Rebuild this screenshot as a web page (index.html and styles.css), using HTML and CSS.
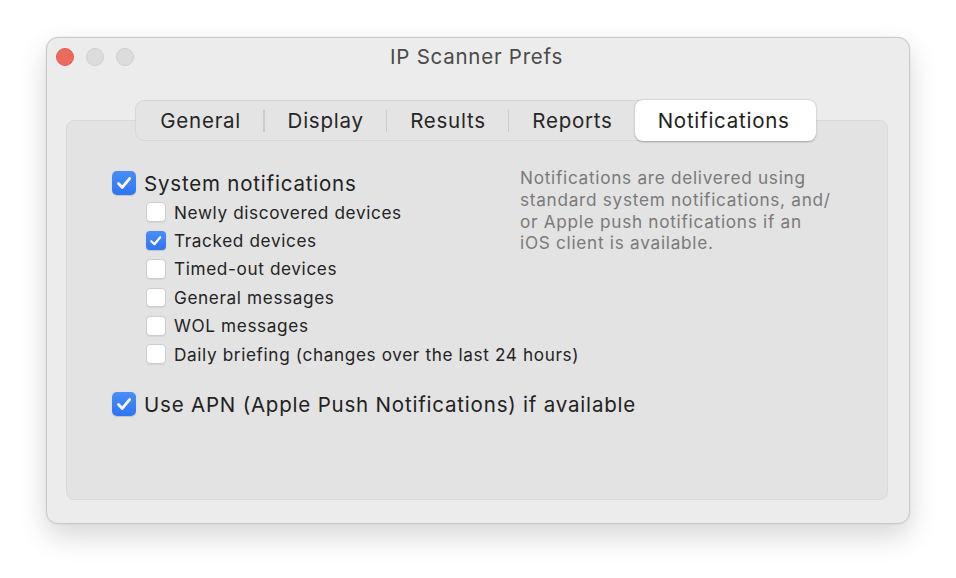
FILE: index.html
```html
<!DOCTYPE html>
<html>
<head>
<meta charset="utf-8">
<title>IP Scanner Prefs</title>
<link rel="stylesheet" href="styles.css">
</head>
<body>
<div class="window">
  <div class="titlebar">
    <div class="lights">
      <span class="light red"></span>
      <span class="light gray"></span>
      <span class="light gray"></span>
    </div>
    <div class="title">IP Scanner Prefs</div>
    <div></div>
  </div>
  <div class="body">
    <div class="tabs">
      <div class="tab first">General</div>
      <div class="sep"></div>
      <div class="tab">Display</div>
      <div class="sep"></div>
      <div class="tab">Results</div>
      <div class="sep"></div>
      <div class="tab">Reports</div>
      <div class="tab active">Notifications</div>
    </div>
    <div class="panel">
      <div class="top">
        <div class="options">
          <label class="row big">
            <span class="box big checked"><svg viewBox="0 0 24 24"><path d="M6.5 12.6 L10.3 16.4 L17.6 7.6"/></svg></span>
            <span>System notifications</span>
          </label>
          <div class="sub">
            <label class="row small"><span class="box small"></span><span>Newly discovered devices</span></label>
            <label class="row small"><span class="box small checked"><svg viewBox="0 0 20 20"><path d="M5.4 10.4 L8.6 13.6 L14.6 6.4"/></svg></span><span>Tracked devices</span></label>
            <label class="row small"><span class="box small"></span><span>Timed-out devices</span></label>
            <label class="row small"><span class="box small"></span><span>General messages</span></label>
            <label class="row small"><span class="box small"></span><span>WOL messages</span></label>
            <label class="row small"><span class="box small"></span><span>Daily briefing (changes over the last 24 hours)</span></label>
          </div>
        </div>
        <p class="help">Notifications are delivered using<br>standard system notifications, and/<br>or Apple push notifications if an<br>iOS client is available.</p>
      </div>
      <label class="row big apn">
        <span class="box big checked"><svg viewBox="0 0 24 24"><path d="M6.5 12.6 L10.3 16.4 L17.6 7.6"/></svg></span>
        <span>Use APN (Apple Push Notifications) if available</span>
      </label>
    </div>
  </div>
</div>
</body>
</html>
```

FILE: styles.css
```css
html, body {
  margin: 0;
  padding: 0;
  background: #ffffff;
}

body {
  font-family: Inter, "Noto Sans", "Liberation Sans", sans-serif;
  color: #242424;
  width: 956px;
  height: 578px;
  overflow: hidden;
}

.window {
  box-sizing: border-box;
  margin: 37px 0 0 46px;
  width: 864px;
  height: 487px;
  background: #ececec;
  border: 1px solid #c9c9c9;
  border-radius: 12px;
  box-shadow: 0 12px 28px rgba(0, 0, 0, 0.16), 0 0 2px rgba(0, 0, 0, 0.1);
  display: flex;
  flex-direction: column;
}

.titlebar {
  height: 38px;
  display: grid;
  grid-template-columns: 1fr auto 1fr;
  align-items: center;
}

.lights {
  display: flex;
  gap: 12px;
  padding-left: 9px;
}

.light {
  width: 18px;
  height: 18px;
  border-radius: 50%;
  box-sizing: border-box;
}

.light.red {
  background: #ed6a5e;
  border: 1px solid #e05a4e;
}

.light.gray {
  background: #dcdcdc;
  border: 1px solid #cfcfcf;
}

.title {
  font-size: 20.5px;
  color: #4a4a4a;
  letter-spacing: 0.75px;
  margin-top: -1px;
  margin-right: 3px;
}

.body {
  flex: 1;
  display: flex;
  flex-direction: column;
  padding: 24px 21px 23px 19px;
}

.tabs {
  align-self: center;
  position: relative;
  z-index: 1;
  display: flex;
  align-items: center;
  height: 41px;
  box-sizing: border-box;
  background: #e4e4e4;
  border: 1px solid #d8d8d8;
  border-radius: 9px;
  margin-right: 3px;
}

.tab {
  font-size: 20.5px;
  letter-spacing: 0.75px;
  color: #262626;
  padding: 0 22px 0 23px;
  height: 100%;
  display: flex;
  align-items: center;
  box-sizing: border-box;
}

.tab.first {
  padding-left: 24px;
}

.tab.active {
  background: #ffffff;
  border-radius: 8px;
  height: 41px;
  margin: -1px -1px -1px 0;
  padding: 0 26px 0 23px;
  box-shadow: 0 0.5px 2px rgba(0, 0, 0, 0.3);
  color: #1e1e1e;
}

.sep {
  width: 1.5px;
  height: 22px;
  background: #cbcbcb;
}

.panel {
  flex: 1;
  margin-top: -21px;
  background: #e3e3e3;
  border: 1px solid #dadada;
  border-radius: 8px;
  padding: 48px 0 0 45px;
  box-sizing: border-box;
}

.top {
  display: flex;
}

.options {
  width: 408px;
  flex: none;
}

.row {
  display: flex;
  align-items: center;
  white-space: nowrap;
}

.row.big {
  height: 28px;
  font-size: 20.5px;
  letter-spacing: 0.8px;
  gap: 8px;
  color: #222222;
}

.row.small {
  height: 28.4px;
  font-size: 17.2px;
  letter-spacing: 0.62px;
  gap: 8.5px;
  color: #242424;
}

.sub {
  margin-top: 1px;
  padding-left: 34px;
}

.box {
  box-sizing: border-box;
  display: flex;
  align-items: center;
  justify-content: center;
  flex: none;
}

.box.big {
  width: 24px;
  height: 24px;
  border-radius: 5px;
}

.box.small {
  width: 19.5px;
  height: 19.5px;
  border-radius: 4px;
  background: #ffffff;
  border: 1px solid #cdcdcd;
  box-shadow: 0 0.5px 1px rgba(0, 0, 0, 0.06);
}

.box.checked {
  background: linear-gradient(#4a8ef8, #2f74f1);
  border: none;
  box-shadow: 0 0.5px 1px rgba(0, 0, 0, 0.15);
}

.box svg {
  width: 100%;
  height: 100%;
}

.box svg path {
  fill: none;
  stroke: #ffffff;
  stroke-linecap: round;
  stroke-linejoin: round;
}

.box.big svg path {
  stroke-width: 2.8;
}

.box.small svg path {
  stroke-width: 2.2;
}

.help {
  margin: 0;
  margin-top: -2px;
  font-size: 17.2px;
  line-height: 21.8px;
  color: #7a7a7a;
  letter-spacing: 0.72px;
}

.apn {
  margin-top: 22px;
}
```
